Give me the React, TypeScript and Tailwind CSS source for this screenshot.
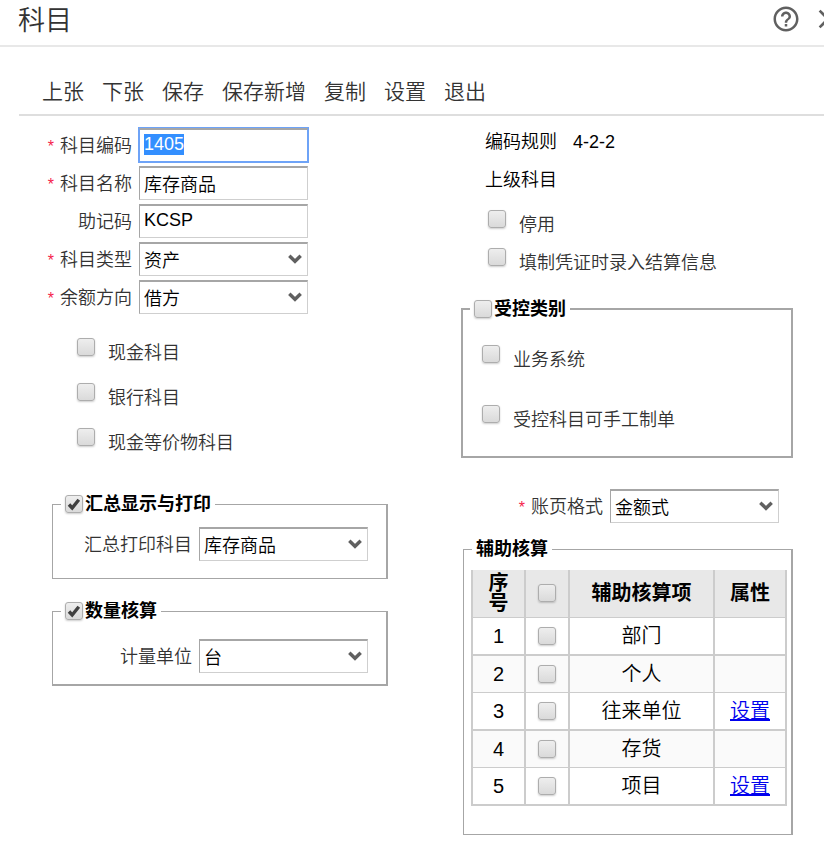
import React, { useEffect, useRef } from 'react';
import { MdClose, MdHelpOutline } from 'react-icons/md';

const toolbar = ['上张', '下张', '保存', '保存新增', '复制', '设置', '退出'];

const auxItems = [
  { id: 1, name: '部门', configurable: false },
  { id: 2, name: '个人', configurable: false },
  { id: 3, name: '往来单位', configurable: true },
  { id: 4, name: '存货', configurable: false },
  { id: 5, name: '项目', configurable: true },
];

const fieldBorder = 'border border-t-2 border-t-[#a6a6a6] border-l-[#a6a6a6] border-r-[#cfcfcf] border-b-[#cfcfcf]';

const Checkbox: React.FC<React.InputHTMLAttributes<HTMLInputElement>> = (props) => (
  <span className="relative block size-[18px] shrink-0">
    <input
      type="checkbox"
      className="peer block size-[18px] appearance-none rounded-[3px] border border-[#adadad] bg-linear-to-b from-[#eeeeee] to-[#dadada] shadow-[0_1px_2px_rgba(0,0,0,0.2)]"
      {...props}
    />
    <svg viewBox="0 0 18 18" className="pointer-events-none absolute inset-0 hidden size-[18px] peer-checked:block">
      <path d="M4 9.5l3.2 3.5L13.8 4.8" fill="none" stroke="#404040" strokeWidth="3.4" />
    </svg>
  </span>
);

const CheckRow: React.FC<{ id: string; label: string }> = ({ id, label }) => (
  <div className="flex h-7 items-start gap-[13px]">
    <Checkbox id={id} />
    <label htmlFor={id} className="leading-[30px] text-[#333]">{label}</label>
  </div>
);

const FieldLabel: React.FC<{ id: string; label: string; required?: boolean }> = ({ id, label, required }) => (
  <label htmlFor={id} className="shrink-0 whitespace-nowrap pt-0.5 text-right text-[#333]">
    {required && <span className="mr-1.5 text-base text-[#f5224b]">*</span>}
    {label}
  </label>
);

const SelectField: React.FC<{ id: string; value: string }> = ({ id, value }) => (
  <div className="relative w-[169px]">
    <select
      id={id}
      defaultValue={value}
      className={`block h-[34px] w-full appearance-none bg-white pl-1 pt-0.5 text-black ${fieldBorder}`}
    >
      <option>{value}</option>
    </select>
    <svg viewBox="0 0 14 10" className="pointer-events-none absolute right-1.5 top-3 h-2.5 w-3.5">
      <path d="M1.3 1.8L7 7.3l5.7-5.5" fill="none" stroke="#606060" strokeWidth="3.4" />
    </svg>
  </div>
);

const TextField: React.FC<{ id: string; value: string; selected?: boolean }> = ({ id, value, selected }) => {
  const ref = useRef<HTMLInputElement>(null);

  useEffect(() => {
    if (selected) {
      ref.current?.focus();
      ref.current?.select();
    }
  }, [selected]);

  return (
    <input
      ref={ref}
      id={id}
      type="text"
      defaultValue={value}
      className={`block h-[34px] w-[169px] bg-white px-1 pb-0.5 text-black outline-none selection:bg-[#338fff] selection:text-white focus:border-x-[#6ea3f7] focus:border-b-[#6ea3f7] focus:ring-1 focus:ring-[#6ea3f7] ${fieldBorder}`}
    />
  );
};

const App: React.FC = () => {
  return (
    <div className="overflow-hidden bg-white font-['Liberation_Sans','Noto_Sans_CJK_SC',sans-serif] text-[18px] leading-6 font-[350] text-black">
      {/* Title bar */}
      <header className="flex h-[47px] items-start justify-between overflow-hidden border-b-2 border-[#e8e8e8] pl-[18px]">
        <h1 className="pt-[3px] text-[27px] leading-9 text-[#333]">科目</h1>
        <div className="-mr-5 flex h-[37px] shrink-0 items-center gap-[11px] text-[#606060]">
          <button type="button" aria-label="帮助">
            <MdHelpOutline size={30} />
          </button>
          <button type="button" aria-label="关闭">
            <MdClose size={32} />
          </button>
        </div>
      </header>

      {/* Toolbar */}
      <nav className="ml-[19px] mt-[29px] flex gap-[18px] border-b-2 border-[#dedede] pb-1.5 pl-[23px] text-[21px] leading-8 text-[#333]">
        {toolbar.map((name) => (
          <button key={name} type="button" className="shrink-0">
            {name}
          </button>
        ))}
      </nav>

      <form className="grid grid-cols-[348fr_332fr] gap-x-[73px] pb-2 pl-10 pr-[31px] pt-3">
        {/* Left column */}
        <div className="min-w-0">
          <div className="grid grid-cols-[92px_1fr] items-center gap-x-[7px] gap-y-1">
            <FieldLabel id="code" label="科目编码" required />
            <TextField id="code" value="1405" selected />
            <FieldLabel id="name" label="科目名称" required />
            <TextField id="name" value="库存商品" />
            <FieldLabel id="mnemonic" label="助记码" />
            <TextField id="mnemonic" value="KCSP" />
            <FieldLabel id="type" label="科目类型" required />
            <SelectField id="type" value="资产" />
            <FieldLabel id="direction" label="余额方向" required />
            <SelectField id="direction" value="借方" />
          </div>

          <div className="mt-6 flex flex-col gap-[17px] pl-[37px]">
            <CheckRow id="cash" label="现金科目" />
            <CheckRow id="bank" label="银行科目" />
            <CheckRow id="equivalent" label="现金等价物科目" />
          </div>

          <fieldset className="ml-3 mt-9 border border-r-2 border-[#a6a6a6] pb-[17px] pr-[18px]">
            <legend className="ml-2 flex items-center gap-0.5 px-1 font-bold">
              <Checkbox id="summary" defaultChecked />
              <label htmlFor="summary">汇总显示与打印</label>
            </legend>
            <div className="flex items-center justify-end gap-[7px] pt-[11px]">
              <FieldLabel id="summaryAccount" label="汇总打印科目" />
              <SelectField id="summaryAccount" value="库存商品" />
            </div>
          </fieldset>

          <fieldset className="ml-3 mt-5 border border-r-2 border-b-2 border-[#a6a6a6] pb-[11px] pr-[18px]">
            <legend className="ml-2 flex items-center gap-0.5 px-1 font-bold">
              <Checkbox id="quantity" defaultChecked />
              <label htmlFor="quantity">数量核算</label>
            </legend>
            <div className="flex items-center justify-end gap-[7px] pt-4">
              <FieldLabel id="unit" label="计量单位" />
              <SelectField id="unit" value="台" />
            </div>
          </fieldset>
        </div>

        {/* Right column */}
        <div className="min-w-0">
          <dl className="mt-0.5 flex flex-col gap-3.5 pl-6">
            <div className="flex gap-4">
              <dt>编码规则</dt>
              <dd>4-2-2</dd>
            </div>
            <div>
              <dt>上级科目</dt>
            </div>
          </dl>

          <div className="mt-[18px] flex flex-col gap-2.5 pl-[27px]">
            <CheckRow id="disabled" label="停用" />
            <CheckRow id="settlement" label="填制凭证时录入结算信息" />
          </div>

          <fieldset className="mt-[21px] border-2 border-[#a6a6a6] pb-[23px]">
            <legend className="ml-[7px] flex items-center gap-0.5 px-1 font-bold">
              <Checkbox id="controlled" />
              <label htmlFor="controlled">受控类别</label>
            </legend>
            <div className="flex flex-col gap-8 pl-[19px] pt-6">
              <CheckRow id="system" label="业务系统" />
              <CheckRow id="manual" label="受控科目可手工制单" />
            </div>
          </fieldset>

          <div className="mt-[31px] flex items-center justify-end gap-[7px] pr-3.5">
            <FieldLabel id="format" label="账页格式" required />
            <SelectField id="format" value="金额式" />
          </div>

          <fieldset className="ml-0.5 mt-3.5 border border-r-2 border-[#a6a6a6] pb-7 pl-[7px] pr-1">
            <legend className="ml-px px-1 font-bold">辅助核算</legend>
            <table className="mt-[9px] w-full table-fixed border-collapse text-center text-[20px] leading-5">
              <thead>
                <tr className="h-[47px] bg-[#e8e8e8] font-bold">
                  <th className="w-[53px] border-x-2 border-b border-[#ccc] px-3">序号</th>
                  <th className="w-[44px] border-x-2 border-b border-[#ccc]">
                    <div className="flex justify-center">
                      <Checkbox aria-label="全选" />
                    </div>
                  </th>
                  <th className="border-x-2 border-b border-[#ccc]">辅助核算项</th>
                  <th className="w-[72px] border-x-2 border-b border-[#ccc]">属性</th>
                </tr>
              </thead>
              <tbody>
                {auxItems.map((item) => (
                  <tr key={item.id} className="h-[38px] border-b border-[#ccc] even:h-[37px] even:bg-[#fafafa] odd:border-b-2">
                    <td className="border-x-2 border-[#ccc]">{item.id}</td>
                    <td className="border-x-2 border-[#ccc]">
                      <div className="flex justify-center">
                        <Checkbox aria-label={item.name} />
                      </div>
                    </td>
                    <td className="border-x-2 border-[#ccc]">{item.name}</td>
                    <td className="border-x-2 border-[#ccc]">
                      {item.configurable && (
                        <a href="#" className="text-[#0000ee] underline">
                          设置
                        </a>
                      )}
                    </td>
                  </tr>
                ))}
              </tbody>
            </table>
          </fieldset>
        </div>
      </form>
    </div>
  );
};

export default App;
